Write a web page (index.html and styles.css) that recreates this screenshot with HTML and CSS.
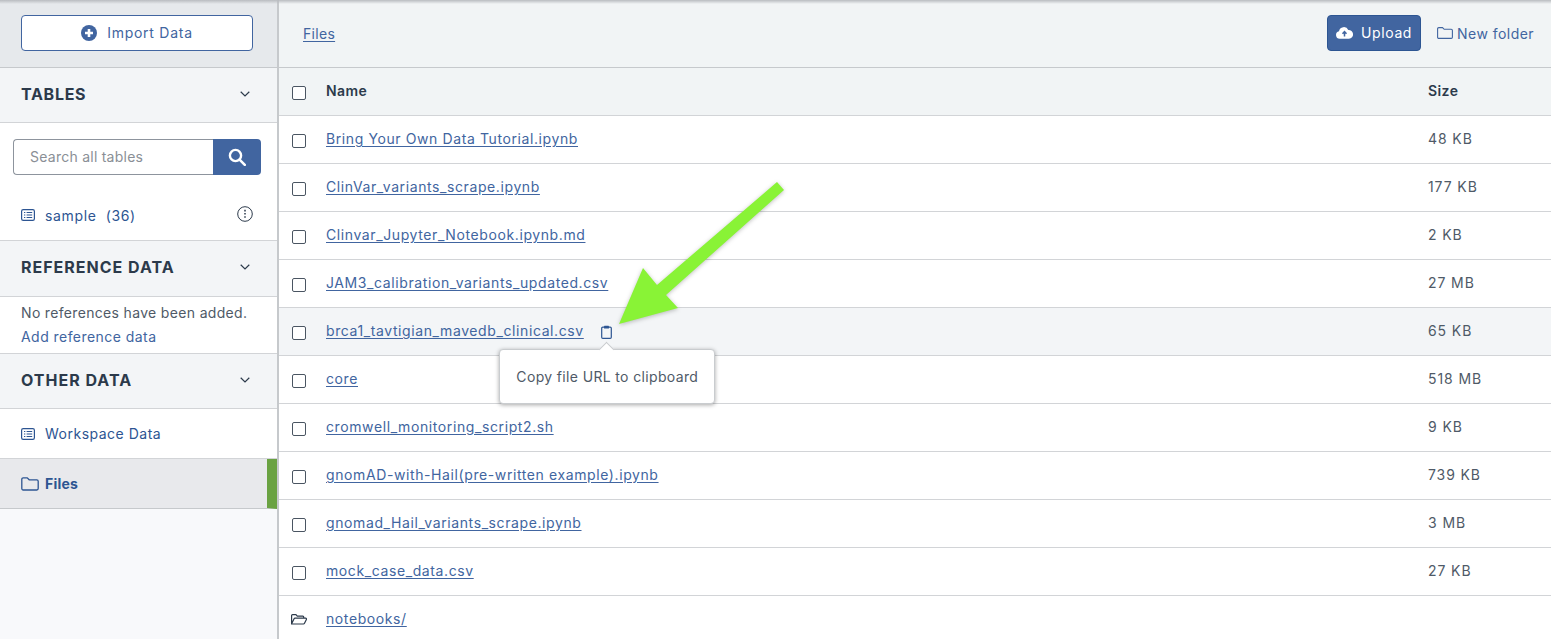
FILE: index.html
```html
<!DOCTYPE html>
<html lang="en">
<head>
<meta charset="utf-8">
<title>Files</title>
<link rel="stylesheet" href="styles.css">
</head>
<body>
<div class="app">
  <aside class="sidebar">
    <div class="import-bar">
      <button class="import-btn">
        <svg class="ico16" viewBox="0 0 16 16"><circle cx="8" cy="8" r="8" fill="#4165a0"/><path d="M8 4v8M4 8h8" stroke="#fff" stroke-width="2.6"/></svg>
        <span>Import Data</span>
      </button>
    </div>
    <div class="sec-head h-tables"><span>TABLES</span><svg class="chev" viewBox="0 0 10 6"><path d="M.7.8 5 5l4.3-4.2" fill="none" stroke="#2c3a4b" stroke-width="1.2"/></svg></div>
    <div class="tables-body">
      <div class="search">
        <div class="search-input">Search all tables</div>
        <div class="search-btn"><svg viewBox="0 0 18 18" width="18" height="18"><circle cx="7.5" cy="7.5" r="5.6" fill="none" stroke="#fff" stroke-width="2.4"/><path d="m11.8 11.8 5 5" stroke="#fff" stroke-width="2.6" stroke-linecap="round"/></svg></div>
      </div>
      <div class="table-link">
        <svg class="ico-list" viewBox="0 0 14 12"><rect x=".6" y=".6" width="12.8" height="10.8" rx="1.6" fill="none" stroke="#2d5592" stroke-width="1.2"/><path d="M3 3.5h1.3M5.6 3.5h5.6M3 6h1.3M5.6 6h5.6M3 8.5h1.3M5.6 8.5h5.6" stroke="#2d5592" stroke-width="1.2"/></svg>
        <span class="t-link sample">sample&nbsp; (36)</span>
        <svg class="info" viewBox="0 0 16 16"><circle cx="8" cy="8" r="7.3" fill="none" stroke="#2c3a4b" stroke-width="1"/><path d="M8 3.800v1.600M8 7v1.600M8 10.200v1.600" stroke="#2c3a4b" stroke-width="1.500"/></svg>
      </div>
    </div>
    <div class="sec-head h-ref"><span>REFERENCE DATA</span><svg class="chev" viewBox="0 0 10 6"><path d="M.7.8 5 5l4.3-4.2" fill="none" stroke="#2c3a4b" stroke-width="1.2"/></svg></div>
    <div class="ref-body">
      <div class="ref-none">No references have been added.</div>
      <div class="ref-add">Add reference data</div>
    </div>
    <div class="sec-head h-other"><span>OTHER DATA</span><svg class="chev" viewBox="0 0 10 6"><path d="M.7.8 5 5l4.3-4.2" fill="none" stroke="#2c3a4b" stroke-width="1.2"/></svg></div>
    <div class="nav-item">
      <svg class="ico-list" viewBox="0 0 14 12"><rect x=".6" y=".6" width="12.8" height="10.8" rx="1.6" fill="none" stroke="#2d5592" stroke-width="1.2"/><path d="M3 3.5h1.3M5.6 3.5h5.6M3 6h1.3M5.6 6h5.6M3 8.5h1.3M5.6 8.5h5.6" stroke="#2d5592" stroke-width="1.2"/></svg>
      <span class="t-link">Workspace Data</span>
    </div>
    <div class="nav-item active">
      <svg class="ico-folder" viewBox="0 0 18 14"><path d="M.8 2.2c0-.8.6-1.4 1.4-1.4h4l2 2h7.6c.8 0 1.4.6 1.4 1.4v7.4c0 .8-.6 1.4-1.4 1.4H2.2c-.8 0-1.4-.6-1.4-1.4z" fill="none" stroke="#2d5592" stroke-width="1.3"/></svg>
      <span class="t-link strong">Files</span>
    </div>
  </aside>
  <main class="content">
    <div class="toolbar">
      <a class="crumb">Files</a>
      <button class="upload">
        <svg class="cloud" viewBox="0 0 17 13"><path d="M4 12.8a3.8 3.8 0 0 1-1-7.5A4.9 4.9 0 0 1 12.300 4a4.400 4.400 0 0 1 .7 8.800z" fill="#fff"/><path d="M8.500 10.500V6M6.500 7.800l2-2.200 2 2.200" fill="none" stroke="#4165a0" stroke-width="1.500"/></svg>
        <span>Upload</span>
      </button>
      <div class="newfolder">
        <svg class="ico-nf" viewBox="0 0 16 12"><path d="M.6 1.800c0-.7.5-1.200 1.200-1.200h3.700l1.700 1.700h7c.7 0 1.200.5 1.200 1.200v6.700c0 .7-.5 1.200-1.200 1.200H1.800c-.7 0-1.200-.5-1.200-1.200z" fill="none" stroke="#4165a0" stroke-width="1.100"/></svg>
        <span>New folder</span>
      </div>
    </div>
    <div class="row head"><i class="check"></i><div class="name">Name</div><div class="size">Size</div></div>
    <div class="row"><i class="check"></i><div class="name"><a>Bring Your Own Data Tutorial.ipynb</a></div><div class="size">48 KB</div></div>
    <div class="row"><i class="check"></i><div class="name"><a>ClinVar_variants_scrape.ipynb</a></div><div class="size">177 KB</div></div>
    <div class="row"><i class="check"></i><div class="name"><a>Clinvar_Jupyter_Notebook.ipynb.md</a></div><div class="size">2 KB</div></div>
    <div class="row"><i class="check"></i><div class="name"><a>JAM3_calibration_variants_updated.csv</a></div><div class="size">27 MB</div></div>
    <div class="row hover"><i class="check"></i><div class="name"><a>brca1_tavtigian_mavedb_clinical.csv</a>
      <span class="clip-wrap">
        <svg class="clip" viewBox="0 0 11 14"><path d="M3 2.200H1.800C1.100 2.200.7 2.700.7 3.300v8.900c0 .6.400 1.100 1.100 1.100h7.400c.7 0 1.100-.5 1.100-1.100V3.300c0-.6-.4-1.100-1.100-1.100H8" fill="none" stroke="#2d5592" stroke-width="1.200"/><rect x="3" y=".8" width="5" height="2.800" rx=".6" fill="#2d5592"/></svg>
        <span class="tooltip">Copy file URL to clipboard</span>
      </span></div><div class="size">65 KB</div></div>
    <div class="row"><i class="check"></i><div class="name"><a>core</a></div><div class="size">518 MB</div></div>
    <div class="row"><i class="check"></i><div class="name"><a>cromwell_monitoring_script2.sh</a></div><div class="size">9 KB</div></div>
    <div class="row"><i class="check"></i><div class="name"><a>gnomAD-with-Hail(pre-written example).ipynb</a></div><div class="size">739 KB</div></div>
    <div class="row"><i class="check"></i><div class="name"><a>gnomad_Hail_variants_scrape.ipynb</a></div><div class="size">3 MB</div></div>
    <div class="row"><i class="check"></i><div class="name"><a>mock_case_data.csv</a></div><div class="size">27 KB</div></div>
    <div class="row last">
      <svg class="open-folder" viewBox="0 0 16 11"><path d="M.6 9.800V1.600c0-.5.400-1 1-1h3.300l1.400 1.500h5.500c.5 0 .9.400.9.900v1.500M.6 9.800l2.500-5c.2-.4.500-.6.900-.6h10.600c.7 0 1.100.6.800 1.200l-1.900 3.900c-.2.400-.6.700-1 .7H.6z" fill="none" stroke="#2c3a4b" stroke-width="1.200"/></svg>
      <div class="name"><a>notebooks/</a></div><div class="size"></div>
    </div>
  </main>
</div>
<div class="topshade"></div>
<svg class="arrow" viewBox="0 0 200 170" width="200" height="170"><path d="M177 7 184 15 66 120 78 133 19 149 43 93 57 110z" fill="#89f336"/></svg>
</body>
</html>
```

FILE: styles.css
```css
* { box-sizing: border-box; }
html, body { margin: 0; height: 639px; overflow: hidden; }
body { font-family: "Inter", "Liberation Sans", sans-serif; font-size: 14px; color: #2c3a4b; background: #fff; position: relative; }
svg { display: block; flex: none; }
.app { display: flex; height: 639px; }
.topshade { position: absolute; left: 0; right: 0; top: 0; height: 4px; background: linear-gradient(#b9bcc0, rgba(196,199,203,0)); }

.sidebar { width: 279px; flex: none; background: #f8f9fb; border-right: 2px solid #c6c9cc; }
.import-bar { height: 68px; background: #e6e9ec; border-bottom: 1px solid #c6c9cc; padding: 15px 0 0 21px; }
.import-btn { width: 232px; height: 36px; display: flex; align-items: center; justify-content: center; gap: 10px; background: #fff; border: 1px solid #4165a0; border-radius: 4px; color: #4165a0; font: inherit; font-weight: 400; font-size: 14px; letter-spacing: .75px; padding: 0 0 1px; }
.ico16 { width: 16px; height: 16px; }

.sec-head { display: flex; align-items: center; justify-content: space-between; background: #f3f5f7; border-bottom: 1px solid #d2d4d7; padding: 0 27px 0 21px; font-weight: 700; font-size: 16px; color: #2c3a4b; letter-spacing: 1px; }
.h-tables { height: 55px; padding-bottom: 2px; letter-spacing: .7px; }
.h-ref { height: 56px; padding-bottom: 3px; }
.h-other { height: 55px; padding-bottom: 2px; }
.chev { width: 10px; height: 6px; }

.tables-body { height: 118px; background: #fff; border-bottom: 1px solid #d2d4d7; padding: 16px 16px 0 13px; }
.search { display: flex; height: 36px; }
.search-input { flex: 1; border: 1px solid #8d949d; border-right: 0; border-radius: 4px 0 0 4px; color: #8a8f96; padding-left: 16px; line-height: 34px; font-size: 14px; letter-spacing: .25px; }
.search-btn { width: 48px; background: #4165a0; border-radius: 0 4px 4px 0; display: flex; align-items: center; justify-content: center; }
.table-link { display: flex; align-items: center; margin: 30px 0 0 8px; height: 20px; gap: 10px; }
.table-link .t-link { flex: 1; }
.t-link.sample { letter-spacing: .65px; }
.info { width: 16px; height: 16px; margin: -2px 8px 0 0; }
.ico-list { width: 14px; height: 12px; }
.t-link { color: #2d5592; font-weight: 400; font-size: 14px; letter-spacing: .5px; }
.t-link.strong { font-weight: 700; letter-spacing: .2px; }

.ref-body { height: 57px; background: #fff; border-bottom: 1px solid #d2d4d7; padding: 4px 21px 0; line-height: 24px; font-size: 14px; }
.ref-none { color: #4f5a67; white-space: nowrap; letter-spacing: .33px; }
.ref-add { color: #4165a0; font-weight: 400; letter-spacing: .45px; }

.nav-item { height: 50px; background: #fff; border-bottom: 1px solid #d2d4d7; display: flex; align-items: center; gap: 10px; padding-left: 21px; }
.nav-item.active { background: #e8e9ec; border-right: 10px solid #6aa242; border-bottom-color: #c6c9cc; gap: 6px; }
.ico-folder { width: 18px; height: 14px; }

.content { flex: 1; min-width: 0; }
.toolbar { height: 68px; background: #f1f4f5; border-bottom: 1px solid #c6c9cc; display: flex; align-items: center; padding: 0 17px 1px 24px; }
.crumb { color: #4165a0; text-decoration: underline; font-weight: 400; font-size: 14px; letter-spacing: .3px; text-underline-offset: 2px; margin-right: auto; }
.upload { width: 94px; height: 36px; background: #4165a0; border: 1px solid #2d5592; border-radius: 4px; color: #fff; font: inherit; font-weight: 400; font-size: 14px; letter-spacing: .6px; display: flex; align-items: center; gap: 8px; padding: 0 0 1px 8px; }
.cloud { width: 17px; height: 13px; }
.newfolder { display: flex; align-items: center; gap: 4px; margin-left: 16px; color: #4165a0; font-weight: 400; font-size: 14px; letter-spacing: .45px; }
.ico-nf { width: 16px; height: 12px; }

.row { height: 48px; display: flex; align-items: center; border-bottom: 1px solid #d2d4d7; padding-left: 13px; background: #fff; }
.row.head { background: #f1f4f5; font-weight: 600; font-size: 14px; letter-spacing: .5px; }
.row.head .check { margin-top: 3px; }
.row.hover { background: #f3f5f7; }
.row.last { border-bottom: 0; padding-bottom: 2px; }
.check { width: 14px; height: 14px; border: 1px solid #4a5562; border-radius: 2px; background: #fff; flex: none; margin: 3px 20px 0 0; display: block; }
.name { flex: 1; min-width: 0; display: flex; align-items: center; margin-top: -2px; }
.name a { color: #4165a0; text-decoration: underline; font-weight: 400; font-size: 14px; letter-spacing: .6px; text-underline-offset: 2px; white-space: nowrap; }
.size { width: 123px; flex: none; font-size: 14px; color: #4f5a67; margin-top: -2px; letter-spacing: .9px; }
.head .size, .head .name { color: #2c3a4b; letter-spacing: .4px; }
.clip-wrap { position: relative; margin-left: 17px; display: block; margin-top: 2px; }
.clip { width: 11px; height: 14px; }
.tooltip { position: absolute; left: 50%; top: 24px; margin-left: 1px; transform: translateX(-50%); width: 216px; height: 55px; background: #fff; border: 1px solid #c9cccf; border-radius: 4px; box-shadow: 0 1px 4px rgba(0,0,0,.35); display: flex; align-items: center; justify-content: center; color: #4f5a67; font-size: 14px; letter-spacing: .35px; white-space: nowrap; z-index: 2; }
.tooltip::before { content: ""; position: absolute; left: 50%; top: -6px; width: 10px; height: 10px; margin-left: -6px; background: #fff; border-left: 1px solid #c9cccf; border-top: 1px solid #c9cccf; transform: rotate(45deg); }
.open-folder { width: 16px; height: 11px; margin: 0 19px 0 -1px; }
.arrow { position: absolute; left: 600px; top: 175px; filter: drop-shadow(0 1px 2px rgba(0,0,0,.25)); z-index: 3; }
```
